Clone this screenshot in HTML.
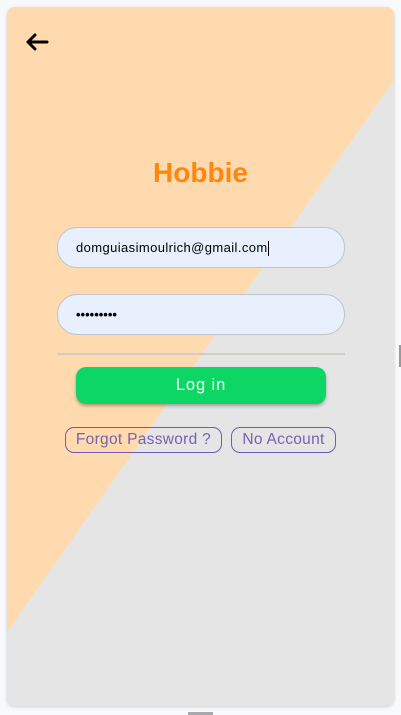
<!DOCTYPE html>
<html><head><meta charset="utf-8"><style>
*{box-sizing:border-box;margin:0;padding:0}
html,body{width:401px;height:715px;overflow:hidden;background:#f8f9fb;font-family:"Liberation Sans",Arial,sans-serif}
.card{position:absolute;left:7px;top:7px;width:387px;height:699px;border-radius:8px;background:#e5e5e5;overflow:hidden;box-shadow:0 1px 3px rgba(0,0,0,.18)}
.peach{position:absolute;inset:0;background:#ffdaae;clip-path:polygon(0 0,387px 0,387px 73px,0 625px)}
.arrow{position:absolute;left:18px;top:26px}
h1{position:absolute;left:0;width:387px;top:150px;text-align:center;color:#ff870f;font-size:28px;font-weight:bold}
.in{position:absolute;left:50px;width:288px;height:41px;border-radius:20px;background:#e8f0fe;border:1px solid #bfc4cf;font-size:13px;color:#000;padding-left:18px;line-height:39px;letter-spacing:.4px}
.div{position:absolute;left:50px;width:288px;top:346px;height:2px;background:#d2ccc6}
.btn{position:absolute;left:69px;top:360px;width:250px;height:37px;border-radius:10px;background:#0dd764;color:#fff;font-size:16.5px;text-align:center;line-height:37px;letter-spacing:.9px;box-shadow:0 2px 3px rgba(0,0,0,.3)}
.lk{position:absolute;top:420px;height:26px;border:1px solid #6f5bb5;border-radius:9px;color:#7562b0;font-size:15.5px;line-height:24px;text-align:center;letter-spacing:.3px}
.handle{position:absolute;left:188px;top:712px;width:25px;height:3px;background:#a9a9ad}
.sb{position:absolute;left:399px;top:345px;width:2px;height:22px;background:#9a9a9a}
</style></head><body>
<div class="card">
<div class="peach"></div>
<svg class="arrow" width="24" height="18" viewBox="0 0 24 18"><path d="M3 9H22M10 2L3 9L10 16" fill="none" stroke="#000" stroke-width="3" stroke-linecap="round" stroke-linejoin="round"/></svg>
<h1>Hobbie</h1>
<div class="in" style="top:220px">domguiasimoulrich@gmail.com<span style="display:inline-block;width:1px;height:15px;background:#000;vertical-align:middle"></span></div>
<div class="in" style="top:287px;font-weight:bold;letter-spacing:0">•••••••••</div>
<div class="div"></div>
<div class="btn">Log in</div>
<div class="lk" style="left:58px;width:157px">Forgot Password ?</div>
<div class="lk" style="left:224px;width:105px">No Account</div>
</div>
<div class="sb"></div>
<div class="handle"></div>
</body></html>
